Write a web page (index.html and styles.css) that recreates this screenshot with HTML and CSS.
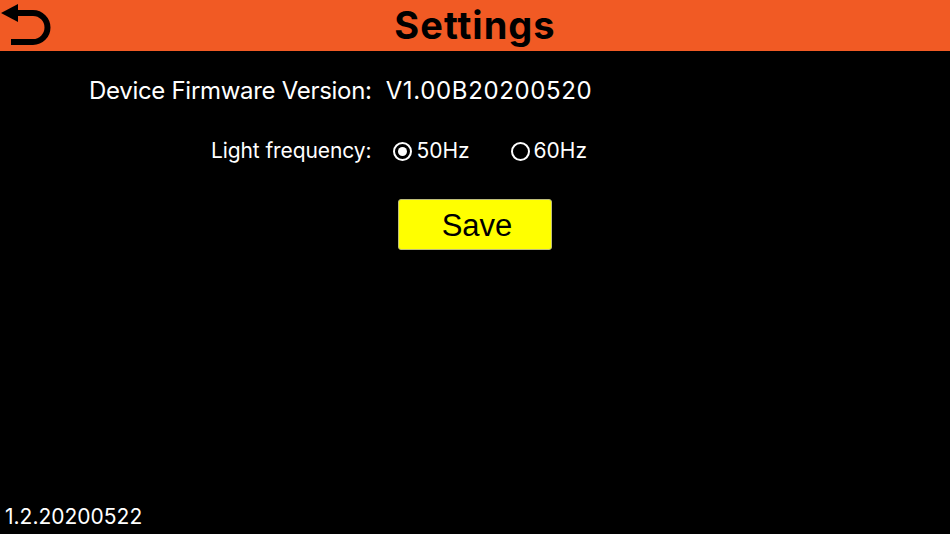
FILE: index.html
```html
<!DOCTYPE html>
<html>
<head>
<meta charset="utf-8">
<link rel="stylesheet" href="styles.css">
</head>
<body>
<div class="screen">
  <header class="topbar">
    <button class="back" aria-label="Back">
      <svg width="52" height="50" viewBox="0 0 52 50">
        <path d="M18 4 L1 13 L18 22 Z" fill="#000"/>
        <path d="M16 13 H33 A14.5 14.5 0 0 1 33 42 H11" fill="none" stroke="#000" stroke-width="6"/>
      </svg>
    </button>
    <h1 class="title">Settings</h1>
  </header>
  <main class="content">
    <div class="firmware"><span class="fw-label">Device Firmware Version:</span><span class="fw-value">V1.00B20200520</span></div>
    <div class="freq">
      <span class="freq-label">Light frequency:</span>
      <label class="radio"><span class="dot checked"></span>50Hz</label>
      <label class="radio second"><span class="dot"></span>60Hz</label>
    </div>
    <div class="save-row"><button class="save">Save</button></div>
  </main>
  <footer class="appver">1.2.20200522</footer>
</div>
</body>
</html>
```
FILE: styles.css
```css
html, body {
  margin: 0;
  padding: 0;
  background: #000;
}
.screen {
  width: 950px;
  height: 534px;
  display: flex;
  flex-direction: column;
  background: #000;
  color: #fff;
  font-family: Inter, "Noto Sans", sans-serif;
  overflow: hidden;
}
.topbar {
  position: relative;
  height: 51px;
  background: #f15a24;
  display: flex;
  align-items: center;
  justify-content: center;
  flex-shrink: 0;
}
.back {
  position: absolute;
  left: 0;
  top: 0;
  padding: 0;
  margin: 0;
  border: 0;
  background: none;
  width: 52px;
  height: 50px;
  line-height: 0;
}
.back svg { display: block; }
.title {
  margin: 0 0 0 0;
  font-size: 38px;
  font-weight: 700;
  color: #000;
  line-height: 51px;
  letter-spacing: 1px;
}
.content {
  flex: 1;
  display: flex;
  flex-direction: column;
}
.firmware {
  margin: 25px 0 0 89px;
  font-size: 24px;
  line-height: 30px;
  white-space: pre;
  display: flex;
}
.fw-label { letter-spacing: -0.3px; }
.fw-value { margin-left: 14px; letter-spacing: 0.65px; }
.freq {
  margin: 32px 0 0 211px;
  display: flex;
  align-items: center;
  font-size: 21px;
  line-height: 26px;
}
.freq-label { margin-right: 22px; letter-spacing: -0.1px; }
.radio {
  display: flex;
  align-items: center;
}
.radio.second { margin-left: 41px; }
.dot {
  width: 15px;
  height: 15px;
  border: 2px solid #fff;
  border-radius: 50%;
  margin-right: 4px;
  position: relative;
  box-sizing: content-box;
  flex-shrink: 0;
}
.dot.checked::after {
  content: "";
  position: absolute;
  left: 3px;
  top: 3px;
  width: 9px;
  height: 9px;
  border-radius: 50%;
  background: #fff;
}
.save-row {
  margin: 35px 0 0 398px;
}
.save {
  width: 154px;
  height: 51px;
  background: #ffff00;
  border: 1px solid #bdbd7a;
  border-radius: 3px;
  font-family: "Liberation Sans", Arial, sans-serif;
  font-size: 31px;
  color: #000;
  padding: 3px 0 0 4px;
  margin: 0;
}
.appver {
  font-size: 21px;
  line-height: 24px;
  padding: 0 0 5px 5px;
}
```
